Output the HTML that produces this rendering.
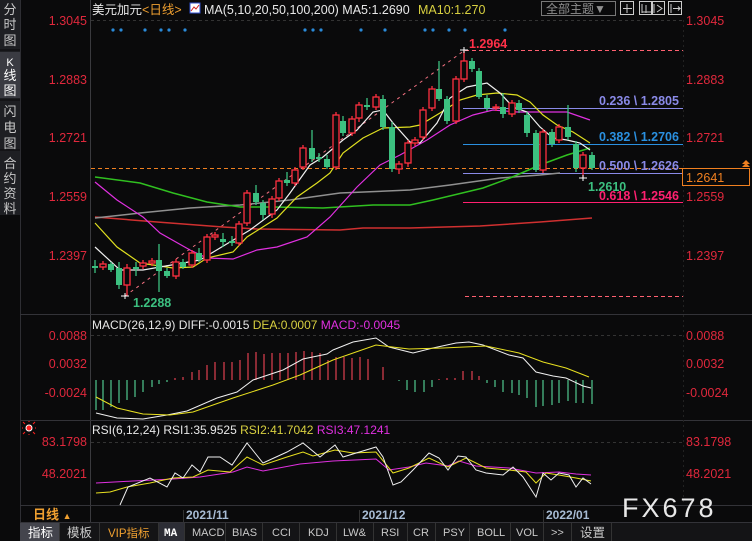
<!DOCTYPE html>
<html><head><meta charset="utf-8"><style>
html,body{margin:0;padding:0;background:#0a0a0b;width:752px;height:541px;overflow:hidden}
svg{display:block}
text{font-family:"Liberation Sans","Noto Sans CJK SC",sans-serif}
.ax{fill:#e0283c;font-size:12.5px}
.tb{font-family:"Liberation Mono","Noto Sans CJK SC",monospace;font-size:11px;fill:#c8c8c8}
</style></head><body>
<svg width="752" height="541" viewBox="0 0 752 541" xmlns="http://www.w3.org/2000/svg">
<rect width="752" height="541" fill="#0a0a0b"/>
<!-- sidebar -->
<rect x="0" y="0" width="20" height="215" fill="#1e1f23"/>
<rect x="0" y="52" width="20" height="46" fill="#3a3b42"/>
<g fill="#c8c8c8" font-size="13" text-anchor="middle">
<text x="10" y="14">分</text><text x="10" y="29">时</text><text x="10" y="45">图</text>
<text x="10" y="66" fill="#fff" font-size="11">K</text><text x="10" y="80" fill="#fff">线</text><text x="10" y="95" fill="#fff">图</text>
<text x="10" y="116">闪</text><text x="10" y="132">电</text><text x="10" y="148">图</text>
<text x="10" y="168">合</text><text x="10" y="183">约</text><text x="10" y="198">资</text><text x="10" y="213">料</text>
</g>
<line x1="0" y1="50" x2="20" y2="50" stroke="#0a0a0b"/><line x1="0" y1="100" x2="20" y2="100" stroke="#0a0a0b"/><line x1="0" y1="150" x2="20" y2="150" stroke="#0a0a0b"/>
<line x1="20.5" y1="0" x2="20.5" y2="541" stroke="#2e2e33"/>
<line x1="90.5" y1="0" x2="90.5" y2="522" stroke="#3a3a3e"/>
<!-- panel separators -->
<line x1="20" y1="314.5" x2="752" y2="314.5" stroke="#333338"/>
<line x1="20" y1="420.5" x2="752" y2="420.5" stroke="#333338"/>
<line x1="20" y1="505.5" x2="752" y2="505.5" stroke="#333338"/>
<line x1="20" y1="522.5" x2="752" y2="522.5" stroke="#333338"/>
<line x1="683.5" y1="20" x2="683.5" y2="505" stroke="#222" stroke-dasharray="2,3"/>
<!-- top header -->
<text x="92" y="14" font-size="12.5" fill="#e8e8e8">美元加元<tspan fill="#f0a030">&lt;日线&gt;</tspan></text>
<rect x="190" y="3" width="10" height="10" fill="#fff" stroke="#3050d0"/>
<polyline points="191,11 194,7 196,9 199,5" fill="none" stroke="#d02020"/>
<text x="204" y="14" font-size="12.5" fill="#e8e8e8">MA(5,10,20,50,100,200) MA5:1.2690</text>
<text x="418" y="14" font-size="12.5" fill="#d8d040">MA10:1.270</text>
<rect x="541.5" y="1.5" width="74" height="14" fill="none" stroke="#777"/>
<text x="546" y="13" font-size="12" fill="#909090">全部主题▼</text>
<g fill="none" stroke="#ccc">
<rect x="620.5" y="1.5" width="13" height="13"/><rect x="639.5" y="1.5" width="13" height="13"/><rect x="651.5" y="1.5" width="13" height="13"/><rect x="668.5" y="1.5" width="13" height="13"/>
<path d="M627 4v9M623 8.5h9M642 4v9M646 5v8M642 12h9M654 4v9M657 5l5 3.5-5 3.5M671 4v9M673 8.5h7l-2-2M678 10.5l2-2"/>
</g>
<!-- axis labels main -->
<g class="ax" text-anchor="end">
<text x="87" y="25">1.3045</text><text x="87" y="84">1.2883</text><text x="87" y="142">1.2721</text><text x="87" y="201">1.2559</text><text x="87" y="260">1.2397</text>
</g>
<g class="ax">
<text x="686" y="25">1.3045</text><text x="686" y="84">1.2883</text><text x="686" y="142">1.2721</text><text x="686" y="201">1.2559</text><text x="686" y="260">1.2397</text>
</g>
<line x1="91" y1="20.5" x2="683" y2="20.5" stroke="#333" stroke-dasharray="3,3"/>
<!-- blue dots -->
<g fill="#2a8ad8">
<circle cx="113" cy="30" r="1.6"/><circle cx="121" cy="30" r="1.6"/><circle cx="145" cy="30" r="1.6"/><circle cx="161" cy="30" r="1.6"/><circle cx="169" cy="30" r="1.6"/><circle cx="185" cy="30" r="1.6"/><circle cx="305" cy="30" r="1.6"/><circle cx="313" cy="30" r="1.6"/><circle cx="321" cy="30" r="1.6"/><circle cx="361" cy="30" r="1.6"/><circle cx="385" cy="30" r="1.6"/><circle cx="425" cy="30" r="1.6"/><circle cx="433" cy="30" r="1.6"/><circle cx="449" cy="30" r="1.6"/><circle cx="465" cy="30" r="1.6"/><circle cx="505" cy="30" r="1.6"/>
</g>
<!-- fib lines -->
<line x1="465" y1="50.5" x2="683" y2="50.5" stroke="#ff6070" stroke-dasharray="4,3"/>
<line x1="465" y1="296.5" x2="683" y2="296.5" stroke="#ff6070" stroke-dasharray="4,3"/>
<line x1="463" y1="108.5" x2="683" y2="108.5" stroke="#8a8ae8"/>
<line x1="463" y1="144.5" x2="683" y2="144.5" stroke="#2a90e0"/>
<line x1="463" y1="173.5" x2="683" y2="173.5" stroke="#8a8ae8"/>
<line x1="463" y1="202.5" x2="683" y2="202.5" stroke="#ff2070"/>
<line x1="91" y1="168.5" x2="683" y2="168.5" stroke="#f08020" stroke-dasharray="4,3"/>
<line x1="125" y1="296" x2="465" y2="50" stroke="#f07080" stroke-dasharray="3,4"/>
<!-- MAs -->
<g fill="none" stroke-width="1.2">
<polyline stroke="#d03030" stroke-width="1.5" points="95,217 157,222 223,227 257,229 340,230 363,228 410,228 480,226 540,222 592,218"/>
<polyline stroke="#909090" stroke-width="1.5" points="95,218 140,213 190,208 240,205 290,200 340,193 410,190 450,185 500,178 540,175 560,173"/>
<polyline stroke="#30c020" stroke-width="1.5" points="95,177 140,183 173,193 207,202 240,207 273,207 323,208 373,205 410,205 433,200 483,188 510,178 540,165 567,155 590,148"/>
<polyline stroke="#e030e0" points="95,182 117,200 143,217 160,233 190,250 207,258 233,259 257,250 277,247 307,237 330,217 357,187 380,165 400,155 427,140 450,125 473,115 493,110 517,112 540,112 567,112 590,120"/>
<polyline stroke="#e0e020" points="95,223 117,247 140,263 173,268 193,267 207,258 233,252 247,237 277,218 297,197 317,183 330,173 343,153 363,138 383,128 410,127 420,125 440,113 460,100 477,95 497,93 517,95 530,102 543,115 557,125 573,132 590,143"/>
<polyline stroke="#f0f0f0" points="95,247 120,270 143,270 200,260 230,242 250,230 277,210 290,193 310,165 323,157 343,140 357,130 373,112 383,110 393,123 410,142 420,143 437,123 450,98 467,87 487,83 500,93 513,107 527,112 540,127 553,138 567,140 580,143 590,150"/>
</g>
<!-- candles -->
<g stroke="#ff3040" fill="none" stroke-width="1.3">
<path d="M103 261v9M127 264v32M143 260v9M152 258v8M176 259v20M192 250v18M207 234v29M215 232v8M239 221v25M247 190v36M272 196v22M279 178v23M295 167v19M303 145v25M336 112v58M352 116v20M359 102v20M376 94v16M399 161v13M408 140v27M415 137v9M423 107v33M432 86v25M456 76v48M464 50v32M496 104v7M512 100v17M543 129v44M559 124v19M583 152v26"/>
</g>
<g fill="#0a0a0b" stroke="#ff3040" stroke-width="1.3">
<rect x="100" y="264" width="6" height="3"/><rect x="124" y="268" width="6" height="17"/><rect x="140" y="263" width="6" height="3"/><rect x="149" y="261" width="6" height="2"/><rect x="173" y="262" width="6" height="14"/><rect x="189" y="253" width="6" height="12"/><rect x="204" y="237" width="6" height="23"/><rect x="212" y="235" width="6" height="2"/><rect x="236" y="224" width="6" height="19"/><rect x="244" y="193" width="6" height="30"/><rect x="269" y="199" width="6" height="15"/><rect x="276" y="181" width="6" height="17"/><rect x="292" y="170" width="6" height="13"/><rect x="300" y="148" width="6" height="19"/><rect x="333" y="115" width="6" height="52"/><rect x="349" y="119" width="6" height="14"/><rect x="356" y="105" width="6" height="13"/><rect x="373" y="97" width="6" height="10"/><rect x="396" y="164" width="6" height="5"/><rect x="405" y="143" width="6" height="20"/><rect x="412" y="140" width="6" height="3"/><rect x="420" y="110" width="6" height="27"/><rect x="429" y="89" width="6" height="19"/><rect x="453" y="79" width="6" height="42"/><rect x="461" y="61" width="6" height="18"/><rect x="493" y="107" width="6" height="1"/><rect x="509" y="103" width="6" height="11"/><rect x="540" y="132" width="6" height="38"/><rect x="556" y="127" width="6" height="13"/><rect x="580" y="155" width="6" height="13"/>
</g>
<g stroke="#3cc080" stroke-width="1.3">
<path d="M95 260v13M111 262v10M119 262v27M136 262v14M159 244v48M167 268v10M183 259v10M199 248v14M223 233v14M232 236v10M256 185v20M263 200v20M287 172v14M312 130v32M319 153v9M327 155v14M343 116v20M367 98v12M383 95v35M392 122v50M439 61v40M447 96v28M472 58v14M479 68v31M487 95v16M503 93v25M519 100v13M527 112v25M536 130v42M552 129v18M568 105v35M576 141v31M592 152v18"/>
</g>
<g fill="#3cc080">
<rect x="92" y="266" width="6" height="2"/><rect x="108" y="264" width="6" height="6"/><rect x="116" y="268" width="6" height="17"/><rect x="133" y="267" width="6" height="2"/><rect x="156" y="260" width="6" height="11"/><rect x="164" y="271" width="6" height="5"/><rect x="180" y="262" width="6" height="5"/><rect x="196" y="253" width="6" height="7"/><rect x="220" y="239" width="6" height="3"/><rect x="229" y="241" width="6" height="2"/><rect x="253" y="193" width="6" height="9"/><rect x="260" y="203" width="6" height="12"/><rect x="284" y="180" width="6" height="3"/><rect x="309" y="148" width="6" height="11"/><rect x="316" y="157" width="6" height="2"/><rect x="324" y="159" width="6" height="8"/><rect x="340" y="121" width="6" height="12"/><rect x="364" y="105" width="6" height="2"/><rect x="380" y="99" width="6" height="28"/><rect x="389" y="127" width="6" height="42"/><rect x="436" y="89" width="6" height="10"/><rect x="444" y="99" width="6" height="22"/><rect x="469" y="61" width="6" height="8"/><rect x="476" y="71" width="6" height="26"/><rect x="484" y="98" width="6" height="10"/><rect x="500" y="107" width="6" height="7"/><rect x="516" y="103" width="6" height="7"/><rect x="524" y="115" width="6" height="18"/><rect x="533" y="133" width="6" height="37"/><rect x="549" y="132" width="6" height="12"/><rect x="565" y="127" width="6" height="10"/><rect x="573" y="144" width="6" height="24"/><rect x="589" y="155" width="6" height="13"/>
</g>
<!-- markers & labels -->
<path d="M121 296h8M125 293v6M460 50h8M464 47v6M579 178h8M583 175v6" stroke="#fff"/>
<text x="133" y="307" font-size="12.5" font-weight="bold" fill="#3cc080">1.2288</text>
<text x="469" y="48" font-size="12.5" font-weight="bold" fill="#ff3048">1.2964</text>
<g font-size="12.5" font-weight="bold">
<text x="599" y="105" fill="#8a8ae8">0.236 \ 1.2805</text>
<text x="599" y="141" fill="#2a90e0">0.382 \ 1.2706</text>
<text x="599" y="170" fill="#8a8ae8">0.500 \ 1.2626</text>
<text x="588" y="191" fill="#3cc080">1.2610</text>
<text x="599" y="200" fill="#ff2070">0.618 \ 1.2546</text>
</g>
<rect x="682.5" y="168.5" width="67" height="17" fill="#0a0a0b" stroke="#f08020"/>
<text x="686" y="182" font-size="12.5" fill="#f08020">1.2641</text>
<path d="M742 164l4-4 4 4zM742 167l4-4 4 4z" fill="#f08020"/>
<!-- MACD -->
<text x="92" y="329" font-size="12" fill="#e8e8e8">MACD(26,12,9) DIFF:-0.0015 <tspan fill="#d8d040">DEA:0.0007</tspan> <tspan fill="#e030e0">MACD:-0.0045</tspan></text>
<g class="ax" text-anchor="end"><text x="87" y="340">0.0088</text><text x="87" y="368">0.0032</text><text x="87" y="397">-0.0024</text></g>
<g class="ax"><text x="686" y="340">0.0088</text><text x="686" y="368">0.0032</text><text x="686" y="397">-0.0024</text></g>
<line x1="91" y1="335.5" x2="683" y2="335.5" stroke="#333" stroke-dasharray="3,3"/>
<g stroke="#50c890" stroke-width="1.2">
<path d="M96 380v30M103 380v30M111 380v27M119 380v23M127 380v20M135 380v17M143 380v12M152 380v7M159 380v4M167 380v2M399 380v1M407 380v10M415 380v12M424 380v12M432 380v7M487 380v3M495 380v7M503 380v12M512 380v13M519 380v15M527 380v18M536 380v27M543 380v26M552 380v25M559 380v23M568 380v21M576 380v23M583 380v23M592 380v24"/>
</g>
<g stroke="#e04050" stroke-width="1.2">
<path d="M175 380v-2M183 380v-3M192 380v-8M199 380v-10M207 380v-15M215 380v-18M224 380v-18M232 380v-18M240 380v-20M248 380v-27M256 380v-28M264 380v-26M272 380v-27M280 380v-27M288 380v-27M296 380v-28M304 380v-29M312 380v-28M320 380v-27M328 380v-20M336 380v-23M344 380v-23M352 380v-22M360 380v-23M368 380v-21M383 380v-13M439 380v-1M447 380v-2M455 380v-2M463 380v-9M472 380v-9M479 380v-4"/>
</g>
<polyline fill="none" stroke="#f0f0f0" points="96,413 117,418 143,419 167,415 187,411 217,398 237,392 253,380 283,370 303,359 327,354 333,350 353,342 376,338 389,347 413,353 433,348 456,343 469,342 483,345 509,355 523,358 536,372 553,376 566,378 583,386 591,388"/>
<polyline fill="none" stroke="#e8e020" points="96,397 117,408 143,414 170,415 193,412 233,398 273,385 300,375 333,360 376,345 409,349 443,348 486,346 519,353 543,362 566,368 589,377"/>
<!-- RSI -->
<circle cx="29" cy="428" r="3" fill="#ff2020" stroke="#fff" stroke-width="1"/>
<path d="M23 422l2 2M35 422l-2 2M23 434l2-2M35 434l-2-2M29 421v1M29 434v1M22 428h1M35 428h1" stroke="#ff2020"/>
<text x="92" y="434" font-size="12" fill="#e8e8e8">RSI(6,12,24) RSI1:35.9525 <tspan fill="#d8d040">RSI2:41.7042</tspan> <tspan fill="#e030e0">RSI3:47.1241</tspan></text>
<g class="ax" text-anchor="end"><text x="87" y="446">83.1798</text><text x="87" y="478">48.2021</text></g>
<g class="ax"><text x="686" y="446">83.1798</text><text x="686" y="478">48.2021</text></g>
<line x1="91" y1="442.5" x2="683" y2="442.5" stroke="#333" stroke-dasharray="3,3"/>
<polyline fill="none" stroke="#e030e0" points="96,483 133,481 173,479 200,477 233,472 247,467 263,471 300,464 333,461 376,459 389,470 409,467 426,463 448,466 459,461 476,466 509,468 536,473 559,472 576,474 591,475"/>
<polyline fill="none" stroke="#e8e020" points="96,493 110,492 127,487 150,483 173,478 193,477 208,470 230,472 247,457 263,465 287,457 303,452 313,456 335,450 353,453 376,452 393,473 409,468 429,458 448,467 466,458 486,468 509,470 526,472 536,483 546,473 559,475 576,478 591,481"/>
<polyline fill="none" stroke="#f0f0f0" points="120,505 128,487 150,478 167,487 175,473 183,478 192,465 200,472 208,457 220,457 232,465 247,443 263,463 287,452 303,443 320,457 335,445 343,457 376,447 383,457 393,485 401,482 413,470 429,453 439,458 448,470 458,456 466,457 476,470 486,473 503,475 513,467 523,477 536,497 543,473 551,480 559,473 569,475 576,487 583,478 591,484"/>
<!-- date row -->
<text x="33" y="519" font-size="13" font-weight="bold" fill="#f0a030">日线 <tspan font-size="9">▲</tspan></text>
<path d="M183.5 510v12M359.5 510v12M543.5 510v12" stroke="#333"/>
<g font-size="12" font-weight="bold" fill="#a8bcd4"><text x="186" y="519">2021/11</text><text x="362" y="519">2021/12</text><text x="546" y="519">2022/01</text></g>
<!-- bottom tabs -->
<rect x="20" y="523" width="732" height="18" fill="#141416"/>
<rect x="20" y="523" width="39" height="18" fill="#44454d"/>
<rect x="158" y="523" width="26" height="18" fill="#2c2d35"/>
<path d="M59.5 523v18M99.5 523v18M158.5 523v18M184.5 523v18M225.5 523v18M262.5 523v18M299.5 523v18M336.5 523v18M373.5 523v18M407.5 523v18M435.5 523v18M469.5 523v18M510.5 523v18M543.5 523v18M571.5 523v18M611.5 523v18" stroke="#333"/>
<text x="28" y="537" font-size="12.5" fill="#fff">指标</text>
<text x="67" y="537" font-size="12.5" fill="#c8c8c8">模板</text>
<text x="108" y="537" font-size="11.5" fill="#f0a030" font-family="Liberation Mono,Noto Sans CJK SC,monospace">VIP指标</text>
<text x="164" y="536" class="tb" fill="#fff" font-weight="bold" style="fill:#fff">MA</text>
<g class="tb">
<text x="192" y="536">MACD</text><text x="232" y="536">BIAS</text><text x="272" y="536">CCI</text><text x="308" y="536">KDJ</text><text x="343" y="536">LW&amp;</text>
<text x="381" y="536">RSI</text><text x="413" y="536">CR</text><text x="443" y="536">PSY</text><text x="477" y="536">BOLL</text><text x="516" y="536">VOL</text><text x="551" y="536">&gt;&gt;</text>
</g>
<text x="580" y="537" font-size="12.5" fill="#c8c8c8">设置</text>
<text x="622" y="517" font-size="27" fill="#e8e8e8" letter-spacing="3">FX678</text>
</svg>
</body></html>
